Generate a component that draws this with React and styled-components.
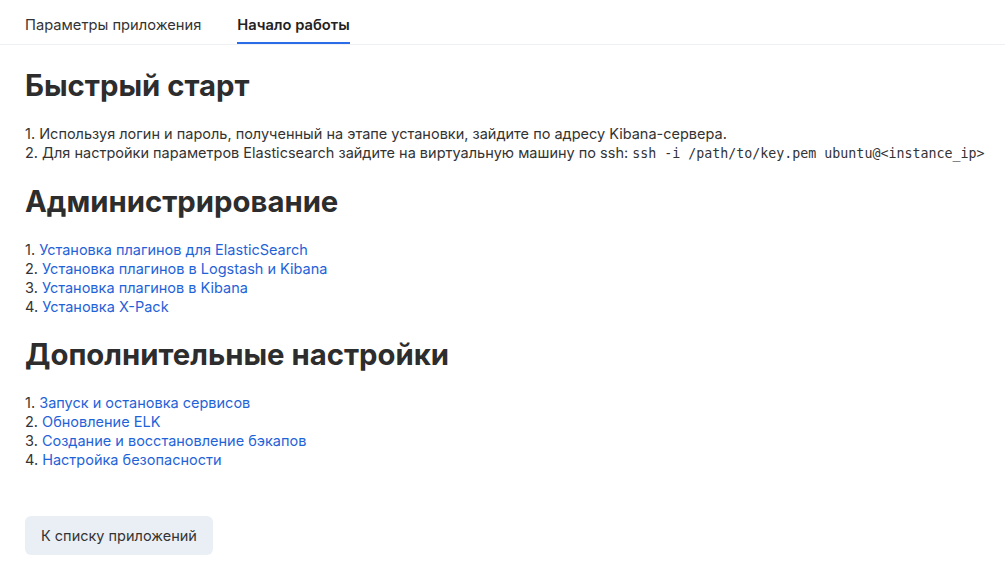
import React from "react";
import styled, { createGlobalStyle } from "styled-components";

const GlobalStyle = createGlobalStyle`
  body {
    margin: 0;
    background: #fff;
    font-family: Inter, "Noto Sans", sans-serif;
    color: #333;
  }
`;

const admin = [
  "Установка плагинов для ElasticSearch",
  "Установка плагинов в Logstash и Kibana",
  "Установка плагинов в Kibana",
  "Установка X-Pack",
];

const extra = [
  "Запуск и остановка сервисов",
  "Обновление ELK",
  "Создание и восстановление бэкапов",
  "Настройка безопасности",
];

export default function App() {
  return (
    <>
      <GlobalStyle />
      <Tabs>
        <Tab>Параметры приложения</Tab>
        <Tab active>Начало работы</Tab>
      </Tabs>
      <Content>
        <Heading>Быстрый старт</Heading>
        <List>
          <li>
            Используя логин и пароль, полученный на этапе установки, зайдите по
            адресу Kibana-сервера.
          </li>
          <li>
            Для настройки параметров Elasticsearch зайдите на виртуальную машину
            по ssh: <Code>ssh -i /path/to/key.pem ubuntu@&lt;instance_ip&gt;</Code>
          </li>
        </List>
        <Heading>Администрирование</Heading>
        <List>
          {admin.map((t) => (
            <li key={t}>
              <Link href="#">{t}</Link>
            </li>
          ))}
        </List>
        <Heading>Дополнительные настройки</Heading>
        <List>
          {extra.map((t) => (
            <li key={t}>
              <Link href="#">{t}</Link>
            </li>
          ))}
        </List>
        <Button>К списку приложений</Button>
      </Content>
    </>
  );
}

const Tabs = styled.nav`
  display: flex;
  gap: 36px;
  padding: 0 25px;
  border-bottom: 1px solid #eef0f3;
`;

const Tab = styled.div`
  font-size: 14.7px;
  line-height: 20px;
  padding: 15px 0 7px;
  color: ${(p) => (p.active ? "#222" : "#333")};
  font-weight: ${(p) => (p.active ? 600 : 400)};
  border-bottom: 2px solid ${(p) => (p.active ? "#2b6de8" : "transparent")};
`;

const Content = styled.main`
  padding: 23px 10px 10px 25px;
  display: flex;
  flex-direction: column;
  align-items: flex-start;
`;

const Heading = styled.h2`
  margin: 0 0 20px;
  font-size: 29.3px;
  line-height: 36px;
  font-weight: 700;
  color: #2d2d2d;
`;

const List = styled.ol`
  margin: 0 0 21px;
  padding: 0;
  list-style: none;
  counter-reset: item;
  font-size: 14.5px;
  line-height: 19px;

  li {
    counter-increment: item;
  }
  li::before {
    content: counter(item) ". ";
    color: #333;
  }
`;

const Link = styled.a`
  color: #1f63d8;
  text-decoration: none;
`;

const Code = styled.code`
  font-family: "DejaVu Sans Mono", monospace;
  font-size: 13.3px;
  white-space: nowrap;
`;

const Button = styled.button`
  margin-top: 26px;
  height: 39px;
  padding: 0 16px;
  border: none;
  border-radius: 6px;
  background: #eaeff5;
  color: #333;
  font-family: Inter, sans-serif;
  font-size: 14.5px;
`;
